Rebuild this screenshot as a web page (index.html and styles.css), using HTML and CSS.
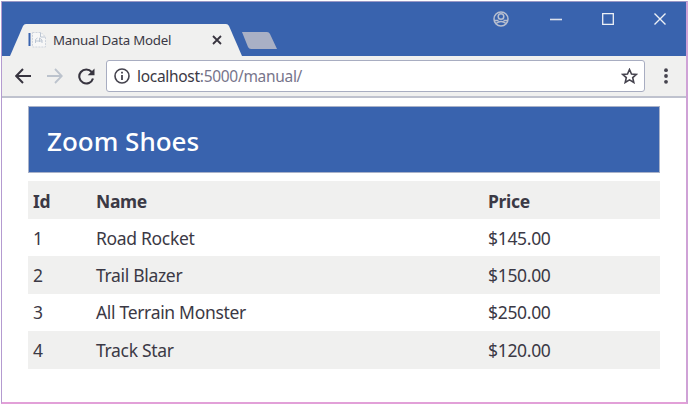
FILE: index.html
```html
<!DOCTYPE html>
<html lang="en">
<head>
<meta charset="utf-8">
<title>Manual Data Model</title>
<link rel="stylesheet" href="styles.css">
</head>
<body>
<div class="window">
  <header class="titlebar">
    <div class="tab">
      <svg class="tab-shape" width="232" height="32" viewBox="0 0 232 32"><path d="M0 32 13 2Q14 0 16 0H216Q218 0 219 2L232 32Z" fill="#f0f0ef"/></svg>
      <svg class="favicon" width="19" height="18" viewBox="0 0 19 18" fill="none"><path d="M1.500 2v13" stroke="#3963ae" stroke-width="2"/><path d="M4.500 1.500H13L17.500 6v10h-13z" fill="#f7f7f7" stroke="#cdd3dc" stroke-dasharray="2 1"/><path d="M12.500 1.500V6H17M7.500 12V8.500L9.500 7M11.500 11V7L14 9v3M7 10h7" stroke="#bcc6d3"/></svg>
      <span class="tab-title">Manual Data Model</span>
      <svg class="tab-close" width="10" height="10" viewBox="0 0 10 10"><path d="M1 1 9 9M9 1 1 9" stroke="#37343f" stroke-width="1.800"/></svg>
    </div>
    <svg class="new-tab" width="36" height="17" viewBox="0 0 36 17"><path d="M1 0H26Q28 0 29 2L36 17H10Q8 17 7 15Z" fill="#a9b0c5"/></svg>
    <div class="controls">
      <svg width="16" height="16" viewBox="0 0 16 16" fill="none" stroke="#b8bfd0" stroke-width="1.500"><circle cx="8" cy="8" r="7"/><circle cx="8" cy="5.500" r="2.800"/><path d="M1.500 9.500H5.500M10.500 9.500H14.500M3 12.500Q8 8.500 13 12.500"/></svg>
      <svg width="12" height="16" viewBox="0 0 12 16"><path d="M0 8.500H12" stroke="#dce1ec" stroke-width="1.600"/></svg>
      <svg width="12" height="12" viewBox="0 0 12 12"><path d="M.7.7H11.300V11.300H.7Z" fill="none" stroke="#eef1f6" stroke-width="1.300"/></svg>
      <svg width="12" height="12" viewBox="0 0 12 12"><path d="M.5.5 11.500 11.500M11.500.5.5 11.500" stroke="#eef1f6" stroke-width="1.400"/></svg>
    </div>
  </header>
  <nav class="toolbar">
    <svg class="back" width="16" height="16" viewBox="0 0 16 16" fill="none" stroke="#37343f" stroke-width="2"><path d="M16 8H1.500M8 1 1.200 8 8 15"/></svg>
    <svg class="forward" width="16" height="16" viewBox="0 0 16 16" fill="none" stroke="#bcc3cd" stroke-width="1.800"><path d="M0 8H14.500M8 1 14.800 8 8 15"/></svg>
    <svg class="reload" width="17" height="17" viewBox="0 0 17 17"><path d="M13.700 4A7 7 0 1 0 15 10.500" fill="none" stroke="#37343f" stroke-width="2.100"/><path d="M16.500.5V7.300H9.700Z" fill="#37343f"/></svg>
    <div class="address">
      <svg width="16" height="16" viewBox="0 0 16 16"><circle cx="8" cy="8" r="7" fill="none" stroke="#45434e" stroke-width="1.600"/><path d="M8 7v5M8 3.800v1.800" stroke="#45434e" stroke-width="1.800"/></svg>
      <span class="url">localhost<span class="path">:5000/manual/</span></span>
      <svg class="star" width="17" height="16" viewBox="0 0 17 16"><path d="M8.500 1.500 10.500 6l4.900.4-3.700 3.200 1.100 4.900-4.300-2.600-4.300 2.600 1.100-4.900L1.600 6.400 6.500 6Z" fill="none" stroke="#45434e" stroke-width="1.600"/></svg>
    </div>
    <svg class="menu" width="4" height="16" viewBox="0 0 4 16" fill="#45434e"><circle cx="2" cy="2.200" r="1.900"/><circle cx="2" cy="8" r="1.900"/><circle cx="2" cy="13.800" r="1.900"/></svg>
  </nav>
  <main class="page">
    <h1 class="banner">Zoom Shoes</h1>
    <table class="products">
      <thead><tr><th class="id">Id</th><th class="name">Name</th><th>Price</th></tr></thead>
      <tbody>
        <tr><td>1</td><td>Road Rocket</td><td class="price">$145.00</td></tr>
        <tr><td>2</td><td>Trail Blazer</td><td class="price">$150.00</td></tr>
        <tr><td>3</td><td>All Terrain Monster</td><td class="price">$250.00</td></tr>
        <tr><td>4</td><td>Track Star</td><td class="price">$120.00</td></tr>
      </tbody>
    </table>
  </main>
</div>
</body>
</html>
```
FILE: styles.css
```css
* { box-sizing: border-box; }
body { margin: 0; background: #fff; font-family: "Noto Sans", "Open Sans", sans-serif; color: #3b3945; overflow: hidden; }
svg { display: block; flex: none; }
.window { width: 687px; height: 403px; margin: 1px 0 0 1px; border: 1px solid #b49bd0; border-top-color: #9a98c6; border-bottom: 2px solid #e2a0d8; border-right: 2px solid #cfa2d6; background: #fff; }
.titlebar { height: 54px; background: #3963ae; display: flex; align-items: flex-start; }
.tab { position: relative; width: 232px; height: 32px; margin: 22px 0 0 8px; display: flex; align-items: center; padding-left: 18px; }
.tab-shape { position: absolute; inset: 0; }
.favicon, .tab-title, .tab-close { position: relative; }
.tab-title { margin-left: 6px; width: 159px; font-size: 13.3px; letter-spacing: -.25px; line-height: 32px; white-space: nowrap; }
.new-tab { margin: 30px 0 0 -1px; }
.controls { margin: 8px 20px 0 auto; height: 18px; display: flex; align-items: center; gap: 40px; }
.controls svg:first-child { margin-right: 1px; }
.toolbar { height: 42px; background: #f0f0ef; border-bottom: 2px solid #bfc2ce; display: flex; align-items: center; padding-left: 13px; }
.forward { margin-left: 16px; }
.reload { margin-left: 15px; }
.address { margin-left: 11px; width: 539px; height: 32px; border: 1.5px solid #a8adc1; border-radius: 3px; background: #fff; display: flex; align-items: center; padding: 0 6px 0 7px; }
.url { margin-left: 7px; font-size: 15.5px; letter-spacing: -.3px; line-height: 28px; }
.path { color: #77758b; }
.star { margin-left: auto; }
.menu { margin-left: 19px; }
.page { padding: 8px 25px 0 26px; }
.banner { margin: 0; width: 632px; height: 67px; border: 1px solid #a9b2c9; background: #3963ae; color: #fff; font-size: 26px; font-weight: 500; line-height: 68px; padding-left: 18px; }
.products { width: 632px; margin-top: 8px; border-collapse: collapse; table-layout: fixed; font-size: 17.5px; letter-spacing: -.32px; }
.products th, .products td { height: 37.4px; padding: 0 5px; text-align: left; line-height: 24px; white-space: nowrap; }
.products th { height: 38px; padding-top: 2px; }
.products .id { width: 62px; }
.products .name { width: 393px; }
.products th:nth-child(2), .products td:nth-child(2) { padding-left: 6px; }
.products thead tr, .products tbody tr:nth-child(even) { background: #f0f0ef; }
```
